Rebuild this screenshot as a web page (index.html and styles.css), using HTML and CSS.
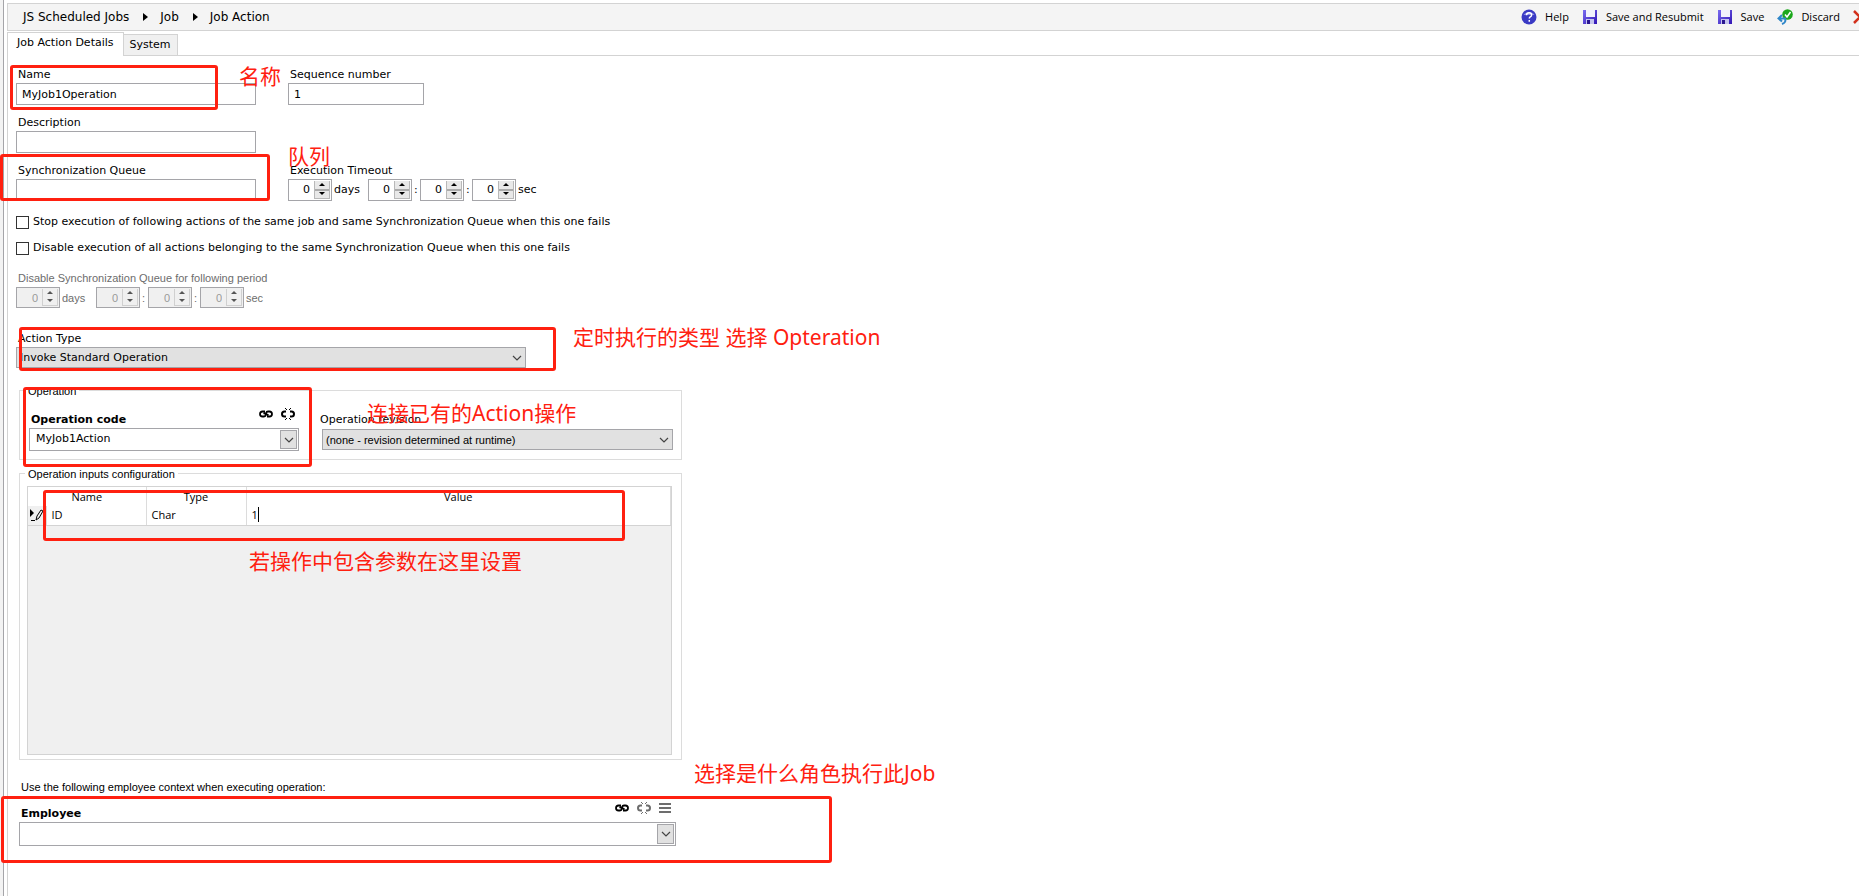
FILE: index.html
```html
<!DOCTYPE html>
<html lang="en">
<head>
<meta charset="utf-8">
<title>Job Action</title>
<link rel="stylesheet" href="styles.css">
</head>
<body>
<svg class="defs" aria-hidden="true">
  <symbol id="link" viewBox="0 0 14 8"><path d="M6 1.500H3.500Q1 1.500 1 4t2.500 2.500H5Q6.500 6.500 7 4.800M8 6.500h2.500Q13 6.500 13 4t-2.500-2.500H9Q7.500 1.500 7 3.200M4.500 3.200l5 1.800" fill="none" stroke="currentColor" stroke-width="1.800"/></symbol>
  <symbol id="unlink" viewBox="0 0 14 12"><path d="M5 3.500H3.500Q1 3.500 1 6t2.500 2.500H5M9 3.500h1.500Q13 3.500 13 6t-2.500 2.500H9" fill="none" stroke="currentColor" stroke-width="2"/><path d="M4 0l2 2M10 0L8 2M4 12l2-2M10 12l-2-2" stroke="currentColor"/></symbol>
  <symbol id="down" viewBox="0 0 10 6"><path d="M1 1l4 4 4-4" fill="none" stroke="#444" stroke-width="1.200"/></symbol>
  <symbol id="disk" viewBox="0 0 16 16"><linearGradient id="ink" x2="1" y2="1"><stop stop-color="#7a6cf0"/><stop offset="1" stop-color="#3216b4"/></linearGradient><path d="M1 1h14v14H1z" fill="url(#ink)"/><path d="M4 1h9v7H4z" fill="#f2f2fc"/><path d="M4 10h8v5H4z" fill="#c4c4ee"/><path d="M5 11h3v4H5z" fill="#2a1690"/></symbol>
</svg>
<div class="app">
  <main class="panel">
    <header class="bar">
      <nav class="crumbs" aria-label="Breadcrumb">
        <a href="#">JS Scheduled Jobs</a><i></i><a href="#">Job</a><i></i><a href="#">Job Action</a>
      </nav>
      <div class="tools">
        <button><svg width="16" height="16" viewBox="0 0 16 16"><circle cx="8" cy="8" r="7.500" fill="#3a3ac4"/><path d="M2.500 6a6 4.500 0 0 1 11 0" fill="#8a8ae6"/><path d="M5.500 6.300q0-2.500 2.600-2.500t2.500 2.200q0 1.200-1.400 1.900-.9.500-.9 1.600M8.300 11v1.700" fill="none" stroke="#fff" stroke-width="1.500"/></svg>Help</button>
        <button><svg width="16" height="16"><use href="#disk"/></svg>Save and Resubmit</button>
        <button><svg width="16" height="16"><use href="#disk"/></svg>Save</button>
        <button><svg width="16" height="16" viewBox="0 0 16 16"><circle cx="10.500" cy="5.500" r="5.300" fill="#1ca81c"/><path d="M8 5.500l2 2.500 3.500-5" fill="none" stroke="#fff" stroke-width="1.500"/><path d="M1.500 9.500H8q1.500 4-3 5.500M5 6L1.500 9.500 5 12.500" fill="none" stroke="#2e86c8" stroke-width="2"/></svg>Discard</button>
        <button aria-label="Delete"><svg width="16" height="16" viewBox="0 0 16 16"><path d="M1 2l12 12M13 2L1 14" stroke="#d2301c" stroke-width="2.500"/></svg></button>
      </div>
    </header>
    <div class="tabs" role="tablist">
      <button class="tab active" role="tab">Job Action Details</button><button class="tab" role="tab">System</button>
    </div>
    <form class="form">
      <div class="fields">
        <div class="field"><label for="name">Name</label><input id="name" value="MyJob1Operation"></div>
        <div class="field short"><label for="seq">Sequence number</label><input id="seq" value="1"></div>
        <div class="field"><label for="desc">Description</label><input id="desc"></div>
        <div></div>
        <div class="field"><label for="queue">Synchronization Queue</label><input id="queue"></div>
        <div class="field time"><span class="label">Execution Timeout</span>
          <div class="spins">
            <span class="spin"><input value="0" aria-label="Days"><b></b></span><span class="days">days</span>
            <span class="spin"><input value="0" aria-label="Hours"><b></b></span><span class="colon">:</span>
            <span class="spin"><input value="0" aria-label="Minutes"><b></b></span><span class="colon">:</span>
            <span class="spin"><input value="0" aria-label="Seconds"><b></b></span><span>sec</span>
          </div>
        </div>
      </div>
      <label class="check"><input type="checkbox">Stop execution of following actions of the same job and same Synchronization Queue when this one fails</label>
      <label class="check"><input type="checkbox">Disable execution of all actions belonging to the same Synchronization Queue when this one fails</label>
      <div class="field off"><span class="label">Disable Synchronization Queue for following period</span>
        <div class="spins">
          <span class="spin"><input value="0" disabled aria-label="Days"><b></b></span><span class="days">days</span>
          <span class="spin"><input value="0" disabled aria-label="Hours"><b></b></span><span class="colon">:</span>
          <span class="spin"><input value="0" disabled aria-label="Minutes"><b></b></span><span class="colon">:</span>
          <span class="spin"><input value="0" disabled aria-label="Seconds"><b></b></span><span>sec</span>
        </div>
      </div>
      <div class="field type"><label for="type">Action Type</label>
        <div class="pick"><select id="type"><option>Invoke Standard Operation</option></select><svg width="10" height="6"><use href="#down"/></svg></div>
      </div>
      <fieldset class="op"><legend>Operation</legend>
        <div class="code">
          <div class="head"><label for="code">Operation code</label><svg width="14" height="8"><use href="#link"/></svg><svg width="14" height="12"><use href="#unlink"/></svg></div>
          <div class="combo"><input id="code" value="MyJob1Action"><button type="button" aria-label="Open"><svg width="10" height="6"><use href="#down"/></svg></button></div>
        </div>
        <div class="rev"><label for="rev">Operation revision</label>
          <div class="pick small"><select id="rev"><option>(none - revision determined at runtime)</option></select><svg width="10" height="6"><use href="#down"/></svg></div>
        </div>
      </fieldset>
      <fieldset class="inputs"><legend>Operation inputs configuration</legend>
        <div class="grid">
          <table>
            <colgroup><col class="c0"><col class="c1"><col class="c1"><col></colgroup>
            <thead><tr><th colspan="2">Name</th><th>Type</th><th>Value</th></tr></thead>
            <tbody><tr><td class="mark"><svg width="15" height="14" viewBox="0 0 15 14"><path d="M1 1v8l4-4z"/><path d="M7 12l1-4 4-6 2 1-4 7zM2 12.500h4" fill="none" stroke="#000"/></svg></td><td>ID</td><td>Char</td><td><span class="caret">1</span></td></tr></tbody>
          </table>
        </div>
      </fieldset>
      <p class="hint">Use the following employee context when executing operation:</p>
      <div class="emp">
        <div class="head"><label for="emp">Employee</label><svg width="14" height="8"><use href="#link"/></svg><svg class="dim" width="14" height="12"><use href="#unlink"/></svg><svg class="dim" width="12" height="10" viewBox="0 0 12 10"><path d="M0 1h12M0 5h12M0 9h12" stroke="currentColor" stroke-width="2"/></svg></div>
        <div class="combo"><input id="emp"><button type="button" aria-label="Open"><svg width="10" height="6"><use href="#down"/></svg></button></div>
      </div>
    </form>
  </main>
  <div class="box b1"></div><div class="box b2"></div><div class="box b3"></div>
  <div class="box b4"></div><div class="box b5"></div><div class="box b6"></div>
  <div class="note n1">名称</div><div class="note n2">队列</div>
  <div class="note n3">定时执行的类型 选择 Opteration</div>
  <div class="note n4">连接已有的Action操作</div>
  <div class="note n5">若操作中包含参数在这里设置</div>
  <div class="note n6">选择是什么角色执行此Job</div>
</div>
</body>
</html>
```
FILE: styles.css
```css
* { box-sizing: border-box; }
body { margin: 0; background: #fff; color: #000; font: 11px/16px "DejaVu Sans", Verdana, sans-serif; }
input, select, button { font: inherit; color: inherit; border-radius: 0; margin: 0; }
svg { display: block; flex: none; }
.defs { position: absolute; width: 0; height: 0; }
.app { position: relative; min-height: 100vh; overflow: hidden; display: flex; background: #f3f3f3; }
.panel { flex: 1; min-width: 0; margin-left: 3px; padding: 3px 0 0 3px; border-left: 1px solid #a5a5a9; background: #fff; }

.bar { display: flex; justify-content: space-between; height: 28px; border: 1px solid #d3d3d3; border-right: 0; background: #f4f4f4; overflow: hidden; }
.crumbs { display: flex; align-items: center; padding-left: 15px; font-size: 12px; }
.crumbs a { color: inherit; text-decoration: none; }
.crumbs i { margin: 0 12px 0 14px; border: 4px solid transparent; border-left: 5px solid #000; border-right: 0; }
.tools { display: flex; align-items: center; gap: 13px; margin-right: -10px; font: 11px/16px "Open Sans", "Segoe UI", sans-serif; }
.tools button { display: flex; align-items: center; gap: 8px; padding: 0; border: 0; background: none; white-space: nowrap; }

.tabs { display: flex; align-items: flex-end; height: 24px; margin-top: 1px; border-bottom: 1px solid #d3d3d3; }
.tab { height: 21px; padding: 0 6px; border: 1px solid #d3d3d3; border-left: 0; border-bottom: 0; background: #f0f0f0; }
.tab.active { height: 24px; margin-bottom: -1px; padding: 0 9px 3px; border-left: 1px solid #d3d3d3; background: #fff; }

.form { padding: 10px 9px 0 8px; border-left: 1px solid #d3d3d3; min-height: calc(100vh - 56px); }
.fields { display: grid; grid-template-columns: 240px max-content; column-gap: 32px; }
.field { display: flex; flex-direction: column; height: 48px; }
.field label, .field .label { padding: 0 2px; line-height: 17px; }
.field > input { height: 22px; padding: 0 5px; border: 1px solid #a5a5a9; background: #fff; }
.short > input { width: 136px; }
.spins { display: flex; align-items: center; }
.spin { display: flex; width: 44px; height: 22px; padding: 1px; border: 1px solid #a5a5a9; }
.spin input { width: 22px; flex: 1; min-width: 0; border: 0; padding: 0 4px 0 0; text-align: right; background: none; }
.spin b { position: relative; width: 16px; border: solid #b8b8b8; border-width: 0 1px 1px; background: linear-gradient(#e8e8e8 8px, #aaa 8px, #aaa 10px, #e8e8e8 10px); }
.spin b::before, .spin b::after { content: ""; position: absolute; left: 4px; border: 3px solid transparent; }
.spin b::before { top: 2px; border-bottom-color: #000; border-top: 0; }
.spin b::after { bottom: 3px; border-top-color: #000; border-bottom: 0; }
.spins span:not(.spin) { padding-left: 2px; }
.days { width: 36px; }
.colon { width: 8px; }

.check { display: flex; align-items: center; height: 26px; gap: 4px; white-space: nowrap; }
.fields + .check { margin-top: -1px; }
.check input { appearance: none; width: 13px; height: 13px; border: 1px solid #333; background: #fff; }
.off { margin-top: 9px; font-family: "Liberation Sans", Arial, sans-serif; color: #6d6d6d; }
.off .spin { height: 21px; background: #f0f0f0; }
.off .spin input { color: #9a9a9a; }
.off .spin b { border-color: #d0d0d0; background: #f0f0f0; }
.off .spin b::before { border-bottom-color: #555; }
.off .spin b::after { border-top-color: #555; }

.type { width: 510px; margin-top: 12px; height: 39px; }
.pick { position: relative; display: flex; }
.pick select { appearance: none; width: 100%; height: 21px; padding: 0 3px; border: 1px solid #a5a5a9; background: #e1e1e1; }
.pick svg { position: absolute; right: 4px; top: 8px; pointer-events: none; }
.small select { font-family: "Liberation Sans", Arial, sans-serif; }

fieldset { position: relative; width: 663px; min-width: 0; margin: 0 0 0 3px; border: 1px solid #dcdcdc; }
legend { position: absolute; top: -8px; left: 5px; padding: 0 3px; background: #fff; font-family: "Liberation Sans", Arial, sans-serif; }
.op { display: flex; justify-content: space-between; height: 70px; margin-top: 21px; padding: 18px 8px 0 9px; }
.code { width: 270px; }
.rev { width: 351px; padding-top: 3px; }
.rev label { display: block; height: 17px; margin-left: -2px; }
.head { display: flex; align-items: center; gap: 8px; height: 19px; }
.head svg { margin-bottom: 10px; }
.head label { flex: 1; padding: 3px 2px 0; font-weight: bold; }
.head svg:last-child { margin-right: 4px; }
.dim { color: #6d6d6d; }
.combo { display: flex; height: 23px; padding: 1px; border: 1px solid #a5a5a9; }
.combo input { flex: 1; min-width: 0; border: 0; padding: 0 5px 2px; background: none; }
.combo button { display: flex; align-items: center; justify-content: center; width: 17px; padding: 0; border: 1px solid #a5a5a9; background: #e1e1e1; }

.inputs { height: 287px; margin-top: 13px; padding: 12px 9px 0 7px; }
.grid { height: 269px; border: 1px solid #d3d3d3; background: #f0f0f0; font: 11px/16px "Open Sans", Tahoma, sans-serif; }
table { width: 100%; table-layout: fixed; border-collapse: collapse; background: #fff; }
.c0 { width: 18px; } .c1 { width: 100px; }
th, td { padding: 0 5px; border-right: 1px solid #dcdcdc; font-weight: normal; }
th { height: 19px; }
td { height: 19px; border-bottom: 1px solid #d3d3d3; }
.mark { padding: 0 1px; background: #f0f0f0; }
.caret { border-right: 1px solid #000; }
.hint { margin: 19px 0 0 5px; font-family: "Liberation Sans", Arial, sans-serif; }
.emp { width: 657px; margin: 8px 0 0 3px; }
.emp .combo { height: 24px; }
.emp .head svg:last-child { margin-right: 5px; }

.box { position: absolute; border: 3px solid #ff2010; border-radius: 3px; }
.b1 { left: 10px; top: 65px; width: 208px; height: 45px; }
.b2 { left: 0; top: 154px; width: 270px; height: 47px; }
.b3 { left: 19px; top: 327px; width: 537px; height: 44px; }
.b4 { left: 23px; top: 387px; width: 289px; height: 80px; }
.b5 { left: 43px; top: 490px; width: 582px; height: 51px; }
.b6 { left: 1px; top: 796px; width: 831px; height: 67px; }
.note { position: absolute; color: #ff2010; font: 21px/30px "Noto Sans", "Noto Sans CJK SC", sans-serif; white-space: nowrap; }
.n1 { left: 239px; top: 61px; }
.n2 { left: 288px; top: 141px; }
.n3 { left: 573px; top: 322px; }
.n4 { left: 367px; top: 398px; }
.n5 { left: 249px; top: 546px; }
.n6 { left: 694px; top: 758px; }
```
